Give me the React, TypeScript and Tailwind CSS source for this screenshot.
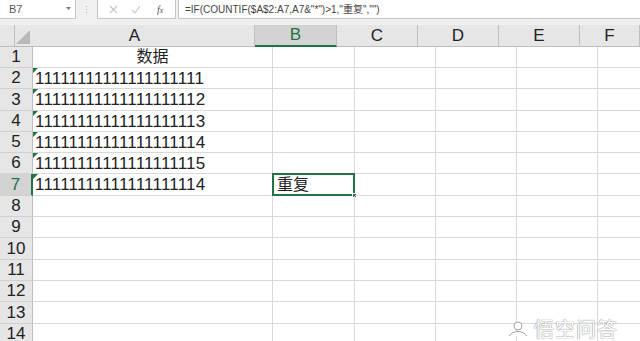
import React from "react";

const rowHeights = [21, 21, 22, 21, 21, 21, 22, 21, 21, 22, 21, 21, 22, 21];
const data: Record<number, string> = {
  2: "11111111111111111111",
  3: "11111111111111111112",
  4: "11111111111111111113",
  5: "11111111111111111114",
  6: "11111111111111111115",
  7: "11111111111111111114",
};
const cols = [
  { key: "A", w: "w-[240px]" },
  { key: "B", w: "w-[82px]" },
  { key: "C", w: "w-[81px]" },
  { key: "D", w: "w-[81px]" },
  { key: "E", w: "w-[81px]" },
  { key: "F", w: "w-[60px]" },
];

export default function App() {
  return (
    <div className="relative w-[640px] h-[341px] overflow-hidden bg-white font-['Liberation_Sans','Noto_Sans_CJK_SC',sans-serif]">
      {/* formula bar */}
      <div className="flex h-[25px] bg-[#f0f0f0] items-start">
        <div className="relative w-[76px] h-[19px] bg-white border-r border-b border-[#c6c6c6] flex items-center pl-[9px] text-[11px] text-[#555]">
          B7
          <svg className="absolute left-[66px] top-[7px]" width="5" height="4" viewBox="0 0 5 4">
            <path d="M0 0 L5 0 L2.5 3 Z" fill="#777" />
          </svg>
        </div>
        <div className="w-[21px] h-[19px] flex flex-col items-center justify-center gap-[2px]">
          <div className="w-[1px] h-[1px] bg-[#aaa]" />
          <div className="w-[1px] h-[1px] bg-[#aaa]" />
          <div className="w-[1px] h-[1px] bg-[#aaa]" />
        </div>
        <div className="w-[79px] h-[19px] bg-white border-l border-r border-b border-[#c6c6c6] flex items-center">
          <svg className="ml-[11px]" width="9" height="9" viewBox="0 0 9 9">
            <path d="M1 1 L8 8 M8 1 L1 8" stroke="#c4c4c4" strokeWidth="1.1" />
          </svg>
          <svg className="ml-[13px]" width="10" height="9" viewBox="0 0 10 9">
            <path d="M1 5 L4 8 L9 1" stroke="#c4c4c4" strokeWidth="1.1" fill="none" />
          </svg>
          <span className="ml-[16px] text-[10px] italic text-[#555] font-['Liberation_Serif',serif]">
            f<span className="text-[8px]">x</span>
          </span>
        </div>
        <div className="ml-[2px] flex-1 h-[19px] bg-white border-l border-b border-[#c6c6c6] flex items-center pl-[6px] text-[10px] text-[#444] whitespace-nowrap">
          =IF(COUNTIF($A$2:A7,A7&amp;"*")&gt;1,"重复","")
        </div>
      </div>

      {/* header row */}
      <div className="flex h-[22px]">
        <div className="relative w-[33px] h-full bg-[#e6e6e6] border-r border-b border-[#bfbfbf]">
          <svg className="absolute left-[16px] top-[5px]" width="14" height="14" viewBox="0 0 14 14">
            <path d="M14 0 L14 14 L0 14 Z" fill="#b9b9b9" />
          </svg>
        </div>
        {cols.map((c) =>
          c.key === "B" ? (
            <div
              key={c.key}
              className={`${c.w} h-full shrink-0 bg-[#d3d3d3] border-r border-[#bfbfbf] border-b-2 border-b-[#217346] flex items-center justify-center text-[17px] text-[#217346]`}
            >
              {c.key}
            </div>
          ) : (
            <div
              key={c.key}
              className={`${c.w} h-full shrink-0 bg-[#e6e6e6] border-r border-b border-[#bfbfbf] flex items-center justify-center text-[17px] text-[#222]`}
            >
              {c.key}
            </div>
          )
        )}
      </div>

      {/* rows */}
      {rowHeights.map((h, i) => {
        const r = i + 1;
        const sel = r === 7;
        return (
          <div key={r} className="flex" style={{ height: h }}>
            <div
              className={
                sel
                  ? "w-[33px] h-full shrink-0 bg-[#d3d3d3] border-r-2 border-r-[#217346] border-b border-b-[#d0d0d0] flex items-center justify-center text-[17px] text-[#217346]"
                  : "w-[33px] h-full shrink-0 bg-[#e6e6e6] border-r border-r-[#bfbfbf] border-b border-b-[#d0d0d0] flex items-center justify-center text-[17px] text-[#222]"
              }
            >
              {r}
            </div>
            {cols.map((c) => {
              const isA = c.key === "A";
              const isB7 = c.key === "B" && sel;
              return (
                <div
                  key={c.key}
                  className={`${c.w} relative h-full shrink-0 border-r border-b border-[#d9d9d9]`}
                >
                  {isA && r === 1 && (
                    <div className="h-full flex items-center justify-center text-[16px] text-[#222]">数据</div>
                  )}
                  {isA && data[r] && (
                    <>
                      <svg className="absolute left-0 top-0" width="5" height="5" viewBox="0 0 5 5">
                        <path d="M0 0 L5 0 L0 5 Z" fill="#217346" />
                      </svg>
                      <div className="h-full flex items-center pl-[2px] pt-[1px] text-[17px] text-[#222] tracking-[0.2px]">
                        {data[r]}
                      </div>
                    </>
                  )}
                  {isB7 && (
                    <>
                      <div className="absolute left-[-1px] top-[-1px] right-[-1px] bottom-[-1px] border-2 border-[#217346]" />
                      <div className="absolute right-[-3px] bottom-[-3px] w-[5px] h-[5px] bg-[#217346] border border-white" />
                      <div className="h-full flex items-center pl-[4px] pt-[1px] text-[16px] text-[#222]">重复</div>
                    </>
                  )}
                </div>
              );
            })}
          </div>
        );
      })}

      {/* watermark */}
      <div className="absolute left-[508px] top-[318px] flex items-center gap-[6px] text-white text-[20px] leading-[22px] [text-shadow:0_0_1px_#8a8a8a,0_0_1px_#8a8a8a]">
        <svg width="20" height="16" viewBox="0 0 20 16">
          <circle cx="10" cy="5" r="4" fill="white" stroke="#999" strokeWidth="0.9" />
          <path d="M1 15 C5 9 15 9 19 15" fill="white" stroke="#999" strokeWidth="0.9" />
        </svg>
        <span className="font-['Noto_Sans_CJK_SC',sans-serif] tracking-[1px]">悟空问答</span>
      </div>
    </div>
  );
}
